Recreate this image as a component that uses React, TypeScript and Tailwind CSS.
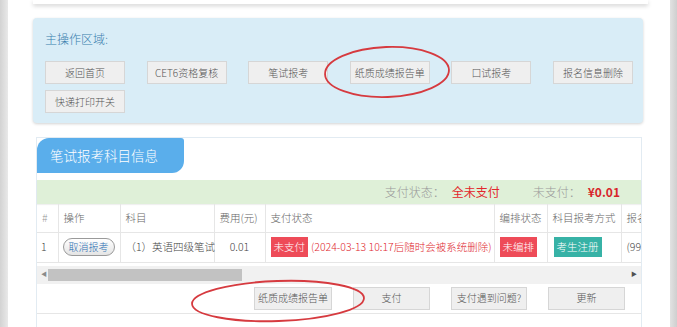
const font = { fontFamily: '"Noto Sans CJK SC", "Liberation Sans", sans-serif' };

const topButtons = ['返回首页', 'CET6资格复核', '笔试报考', '纸质成绩报告单', '口试报考', '报名信息删除'];

const Btn = ({ label, className = '' }: { label: string; className?: string }) => (
  <button
    className={`h-[23px] bg-[#efefef] border border-[#d6d6d6] text-[10px] font-light text-[#555] leading-none whitespace-nowrap flex items-center justify-center ${className}`}
  >
    {label}
  </button>
);

const App = () => {
  return (
    <div className="relative w-[677px] h-[327px] overflow-hidden bg-white flex font-light" style={font}>
      {/* left gutter */}
      <div className="w-[8px] h-full bg-gradient-to-r from-[#d3d3d3] to-[#e9e9e9]" />

      <div className="flex-1 flex flex-col">
        {/* previous card bottom */}
        <div className="ml-[25px] w-[615px] h-[4px] bg-white shadow-[0_2px_4px_rgba(0,0,0,0.18)]" />

        {/* main action area */}
        <div className="ml-[25px] mt-[14px] w-[610px] h-[105px] bg-[#d9edf7] rounded-[4px] shadow-[0_1px_3px_rgba(0,0,0,0.18)] pl-[12px] pt-[12px]">
          <div className="text-[12px] leading-[17px] text-[#3a7fae]">主操作区域:</div>
          <div className="mt-[14px] flex gap-x-[21.6px]">
            {topButtons.map((b) => (
              <Btn key={b} label={b} className="w-[80px]" />
            ))}
          </div>
          <div className="mt-[6px] flex">
            <Btn label="快递打印开关" className="w-[80px]" />
          </div>
        </div>

        {/* subject info card */}
        <div className="ml-[28px] mt-[14px] w-[606px] flex-1 border border-[#e2ebf2] border-b-0 bg-white flex flex-col">
          <div className="w-[147px] h-[35px] bg-[#5aaeeb] rounded-tl-[12px] rounded-tr-[3px] rounded-br-[12px] flex items-center pl-[13px]">
            <span className="text-[13.5px] text-white">笔试报考科目信息</span>
          </div>

          <div className="mt-[7px] h-[24px] bg-[#dff0d8] flex items-center justify-end pr-[21px] text-[12px] shadow-[0_1px_1px_rgba(0,0,0,0.06)]">
            <span className="text-[#9a9a9a]">支付状态：</span>
            <span className="ml-[7px] text-[#e3262c] font-normal">全未支付</span>
            <span className="ml-[33px] text-[#9a9a9a]">未支付：</span>
            <span className="ml-[7px] text-[#d8252b] font-bold">¥0.01</span>
          </div>

          {/* table */}
          <div className="overflow-hidden">
            <table className="table-fixed border-collapse text-[10.5px] text-[#666] w-[690px]">
              <colgroup>
                <col className="w-[21px]" />
                <col className="w-[62px]" />
                <col className="w-[94px]" />
                <col className="w-[51px]" />
                <col className="w-[229px]" />
                <col className="w-[53px]" />
                <col className="w-[74px]" />
                <col className="w-[106px]" />
              </colgroup>
              <thead>
                <tr className="h-[28px] border-b border-[#e6e6e6]">
                  <th className="font-light text-left pl-[5px] text-[#999] border-r border-[#e6e6e6]">#</th>
                  <th className="font-light text-left pl-[5px] border-r border-[#e6e6e6]">操作</th>
                  <th className="font-light text-left pl-[5px] border-r border-[#e6e6e6]">科目</th>
                  <th className="font-light text-left pl-[5px] border-r border-[#e6e6e6]">费用(元)</th>
                  <th className="font-light text-left pl-[5px] border-r border-[#e6e6e6]">支付状态</th>
                  <th className="font-light text-left pl-[5px] border-r border-[#e6e6e6]">编排状态</th>
                  <th className="font-light text-left pl-[5px] border-r border-[#e6e6e6]">科目报考方式</th>
                  <th className="font-light text-left pl-[5px] whitespace-nowrap overflow-hidden">报名序号</th>
                </tr>
              </thead>
              <tbody>
                <tr className="h-[30px] border-b border-[#e6e6e6] text-[#444]">
                  <td className="pl-[4px] border-r border-[#e6e6e6]">1</td>
                  <td className="pl-[4px] border-r border-[#e6e6e6]">
                    <span className="inline-flex items-center h-[18px] px-[5px] rounded-full border border-[#9a9a9a] bg-gradient-to-b from-white to-[#e4e4e4] text-[#2c6fb3] text-[10px] leading-none">
                      取消报考
                    </span>
                  </td>
                  <td className="pl-[5px] border-r border-[#e6e6e6] whitespace-nowrap">（1）英语四级笔试</td>
                  <td className="text-center border-r border-[#e6e6e6]">0.01</td>
                  <td className="pl-[5px] border-r border-[#e6e6e6] whitespace-nowrap">
                    <span className="inline-flex items-center h-[20px] px-[3px] bg-[#ee4b58] text-white text-[10.5px] leading-none align-middle">
                      未支付
                    </span>
                    <span className="ml-[3px] text-[#e0282e] align-middle text-[10.5px]">(2024-03-13 10:17后随时会被系统删除)</span>
                  </td>
                  <td className="pl-[5px] border-r border-[#e6e6e6]">
                    <span className="inline-flex items-center h-[20px] px-[3px] bg-[#ee4b58] text-white text-[10.5px] leading-none">
                      未编排
                    </span>
                  </td>
                  <td className="pl-[6px] border-r border-[#e6e6e6]">
                    <span className="inline-flex items-center h-[20px] px-[3px] bg-[#37b2a6] text-white text-[10.5px] leading-none">
                      考生注册
                    </span>
                  </td>
                  <td className="pl-[5px] whitespace-nowrap">(99000000000)</td>
                </tr>
              </tbody>
            </table>
          </div>

          {/* horizontal scrollbar */}
          <div className="mt-[3px] h-[18px] bg-[#f1f1f1] flex items-center relative">
            <span className="absolute left-[4px] top-[5px] text-[6px] text-[#8a8a8a] leading-none">◀</span>
            <div className="ml-[11px] w-[194px] h-[12px] bg-[#c2c2c2]" />
            <span className="absolute right-[4px] top-[5px] text-[6px] text-[#505050] leading-none">▶</span>
          </div>

          {/* footer buttons */}
          <div className="h-[30px] border-b border-[#e6e6e6] flex items-center justify-end gap-[21px] pr-[16px]">
            <Btn label="纸质成绩报告单" className="w-[78px]" />
            <Btn label="支付" className="w-[77px]" />
            <Btn label="支付遇到问题?" className="w-[76px]" />
            <Btn label="更新" className="w-[77px]" />
          </div>
        </div>
      </div>

      {/* right gutter */}
      <div className="w-[7px] h-full bg-gradient-to-r from-[#e2e2e2] to-[#cfcfcf]" />

      {/* red annotation circles */}
      <svg className="absolute left-0 top-0 pointer-events-none" width="677" height="327">
        <ellipse cx="387" cy="72" rx="62" ry="25" fill="none" stroke="#d63a3f" strokeWidth="1.8" transform="rotate(-2 387 72)" />
        <ellipse cx="278" cy="301" rx="86" ry="20" fill="none" stroke="#d63a3f" strokeWidth="1.8" transform="rotate(-2 278 301)" />
      </svg>
    </div>
  );
};

export default App;
